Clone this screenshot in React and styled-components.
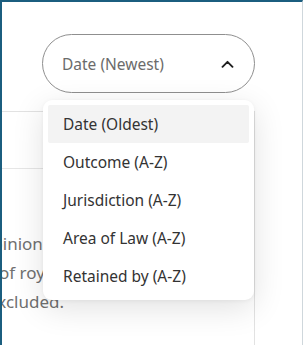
import React from 'react';
import styled, { createGlobalStyle } from 'styled-components';

const Global = createGlobalStyle`
  html, body { margin: 0; padding: 0; background: #fff; }
  body { font-family: "Noto Sans", "Open Sans", sans-serif; }
`;

const Frame = styled.div`
  box-sizing: border-box;
  width: 303px;
  height: 345px;
  overflow: hidden;
  background: #fff;
  border-top: 2px solid #1b5e7f;
  border-left: 2px solid #1b5e7f;
  border-right: 1px solid #cfd7dc;
  padding: 32px 47px 0 0;
  display: flex;
  flex-direction: column;
  align-items: flex-end;
`;

const SortWrap = styled.div`
  position: relative;
  width: 213px;
  z-index: 2;
`;

const SortButton = styled.button`
  box-sizing: border-box;
  width: 100%;
  height: 59px;
  border: 1px solid #8f8f8f;
  border-radius: 30px;
  background: #fff;
  padding: 0 20px 0 19px;
  display: flex;
  align-items: center;
  justify-content: space-between;
  font-family: inherit;
  font-size: 15.5px;
  color: #6b6b6b;
  cursor: pointer;
`;

const Menu = styled.ul`
  position: absolute;
  top: calc(100% + 7px);
  left: 1px;
  right: 1px;
  margin: 0;
  padding: 5px;
  list-style: none;
  background: #fff;
  border-radius: 9px;
  box-shadow: 0 8px 32px rgba(0, 0, 0, 0.12), 0 1px 4px rgba(0, 0, 0, 0.05);
`;

const Item = styled.li`
  height: 38px;
  display: flex;
  align-items: center;
  padding-left: 15px;
  font-size: 15.5px;
  color: #333;
  border-radius: 2px;
  background: ${p => (p.$active ? '#f3f3f3' : 'transparent')};
`;

const Card = styled.div`
  align-self: stretch;
  margin-top: 18px;
  border-top: 1px solid #e2e2e2;
  border-right: 1px solid #e2e2e2;
  flex: 1;
`;

const CardHead = styled.div`
  height: 56px;
  border-bottom: 1px solid #e6e6e6;
`;

const CardBody = styled.div`
  padding-top: 60px;
  font-size: 17px;
  line-height: 29px;
  color: #707070;
  white-space: nowrap;
`;

const Line = styled.span`
  display: block;
  margin-left: ${p => p.$shift}px;
`;

const Chevron = () => (
  <svg width="13" height="8" viewBox="0 0 13 8" fill="none">
    <path d="M1.5 6.8 L6.5 1.8 L11.5 6.8" stroke="#1f1f1f" strokeWidth="1.9" strokeLinecap="round" strokeLinejoin="round" />
  </svg>
);

const options = ['Date (Oldest)', 'Outcome (A-Z)', 'Jurisdiction (A-Z)', 'Area of Law (A-Z)', 'Retained by (A-Z)'];

export default function App() {
  return (
    <>
      <Global />
      <Frame>
        <SortWrap>
          <SortButton>
            <span>Date (Newest)</span>
            <Chevron />
          </SortButton>
          <Menu>
            {options.map((o, i) => (
              <Item key={o} $active={i === 0}>{o}</Item>
            ))}
          </Menu>
        </SortWrap>
        <Card>
          <CardHead />
          <CardBody>
            <Line $shift={-20}>opinion of the tribunal</Line>
            <Line $shift={-3}>of royalties and fees</Line>
            <Line $shift={-14}>excluded.</Line>
          </CardBody>
        </Card>
      </Frame>
    </>
  );
}
